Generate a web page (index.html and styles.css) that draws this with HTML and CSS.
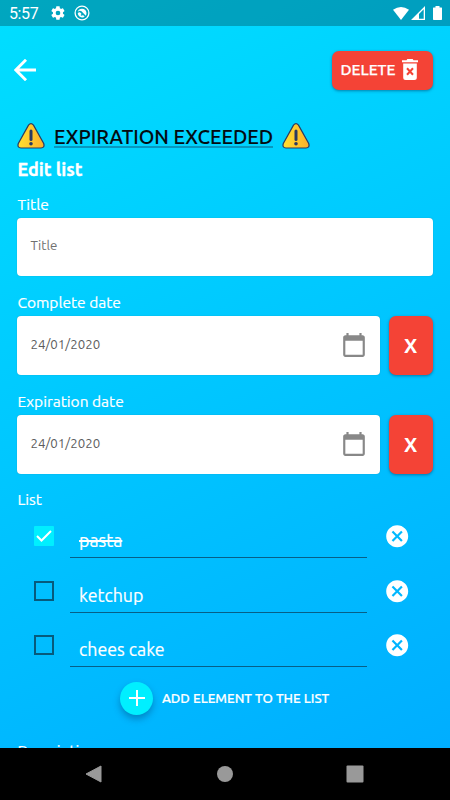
FILE: index.html
```html
<!DOCTYPE html>
<html lang="en">
<head>
<meta charset="utf-8">
<title>Edit list</title>
<link rel="stylesheet" href="styles.css">
</head>
<body>
<svg class="defs" width="0" height="0">
  <defs>
    <linearGradient id="amber" x1="0" x2="1"><stop offset="0" stop-color="#ffe02f"/><stop offset="1" stop-color="#fdb02c"/></linearGradient>
    <symbol id="warning" viewBox="0 0 28 26">
      <path d="M11.5 2.2Q14 -1 16.5 2.2L26.7 20.5Q28 24.7 24 25H4Q0 24.7 1.3 20.5Z" fill="url(#amber)" stroke="#2c3a61" stroke-width="1.2"/>
      <path d="M14 8v8.500" stroke="#2c3a61" stroke-width="3" stroke-linecap="round"/>
      <circle cx="14" cy="20.700" r="1.800" fill="#2c3a61"/>
    </symbol>
    <symbol id="calendar" viewBox="0 0 24 24">
      <path d="M20 3h-1V1h-2v2H7V1H5v2H4c-1.100 0-2 .9-2 2v16c0 1.100.9 2 2 2h16c1.100 0 2-.9 2-2V5c0-1.100-.9-2-2-2zm0 18H4V8h16v13z"/>
    </symbol>
    <symbol id="remove" viewBox="0 0 24 24">
      <path d="M12 2C6.470 2 2 6.470 2 12s4.470 10 10 10 10-4.470 10-10S17.530 2 12 2zm5 13.590L15.590 17 12 13.410 8.410 17 7 15.590 10.590 12 7 8.410 8.410 7 12 10.590 15.590 7 17 8.410 13.410 12 17 15.590z"/>
    </symbol>
  </defs>
</svg>
<div class="phone">
  <div class="status">
    <span class="clock">5:57</span>
    <svg class="gear" viewBox="0 0 24 24"><path d="M19.400 13c0-.3.100-.6.100-1s0-.7-.1-1l2.100-1.700c.2-.1.200-.4.100-.6l-2-3.500c-.1-.2-.4-.3-.6-.2l-2.500 1c-.5-.4-1.100-.7-1.700-1l-.4-2.600c0-.2-.2-.4-.5-.4h-4c-.2 0-.5.200-.5.400L9 5c-.6.300-1.200.6-1.700 1l-2.500-1c-.2-.1-.5 0-.6.200l-2 3.500c-.1.200-.1.500.1.600L4.500 11c0 .3-.1.700-.1 1s0 .7.100 1l-2.200 1.700c-.2.100-.2.400-.1.600l2 3.500c.1.200.4.300.6.200l2.500-1c.5.400 1.100.7 1.700 1l.4 2.600c0 .2.300.4.500.4h4c.3 0 .5-.2.500-.4l.4-2.600c.6-.3 1.200-.6 1.700-1l2.500 1c.2.100.5 0 .6-.2l2-3.500c.1-.2.100-.5-.1-.6zM12 15.500a3.500 3.500 0 1 1 0-7 3.500 3.500 0 0 1 0 7z"/></svg>
    <svg class="ring" viewBox="0 0 16 16"><circle cx="8" cy="8" r="6.900" fill="none" stroke="#fff" stroke-width="1.300"/><path d="M3.700 7A4.500 4.500 0 0 1 12.400 7.200Q12.700 9.200 11.800 10.700L7.500 6.300Q5.500 5 3.700 7ZM3.700 8.500Q4.500 12 8 12.400Q9.600 12.500 10.700 11.700L9 10.100Q7.500 11.300 6.500 9.900L7.600 9L6.200 7.400Q4.500 7 3.700 8.500Z"/></svg>
    <span class="grow"></span>
    <svg class="wifi" viewBox="0 0 16 13"><path d="M0 2.700Q8-2.500 16 2.700L8 13Z"/></svg>
    <svg class="signal" viewBox="0 0 14 14"><path d="M14 0V14H0ZM12.700 3.200L8 7.900V12.700H12.700Z" fill-rule="evenodd"/></svg>
    <svg class="battery" viewBox="0 0 9 14"><path d="M2.500 0h4v1.400H8.500q.5 0 .5.600V13.300q0 .7-.7.700H.7Q0 14 0 13.300V2q0-.6.500-.6H2.500z"/></svg>
  </div>
  <main class="screen">
    <header class="bar">
      <svg class="back" viewBox="0 0 22 22"><path d="M12 .8L1.800 11L12 21.200M2 11H22" fill="none" stroke="#fff" stroke-width="2.900"/></svg>
      <button class="red delete"><span>DELETE</span>
        <svg class="trash" viewBox="0 0 16 21"><path d="M0 1.300h4.500L5.300 0h5.400l.8 1.300H16v2H0zM1.200 4.600h13.600V18.500q0 2.500-2.500 2.500H3.700q-2.500 0-2.500-2.500z"/><path d="M5 9.300l6 6.400m0-6.400l-6 6.400" stroke="#f44336" stroke-width="2"/></svg>
      </button>
    </header>
    <div class="alert">
      <svg class="warn"><use href="#warning"/></svg>
      <span class="alert-text">EXPIRATION EXCEEDED</span>
      <svg class="warn"><use href="#warning"/></svg>
    </div>
    <h1 class="heading">Edit list</h1>
    <div class="label l-title">Title</div>
    <div class="field"><span class="hint">Title</span></div>
    <div class="label l-complete">Complete date</div>
    <div class="row">
      <div class="field"><span class="date">24/01/2020</span><svg class="cal"><use href="#calendar"/></svg></div>
      <button class="red clear">X</button>
    </div>
    <div class="label l-expiration">Expiration date</div>
    <div class="row">
      <div class="field"><span class="date">24/01/2020</span><svg class="cal"><use href="#calendar"/></svg></div>
      <button class="red clear">X</button>
    </div>
    <div class="label l-list">List</div>
    <div class="items">
      <div class="item">
        <span class="check on"><svg viewBox="0 0 20 20"><path d="M3 10l4.500 4.500L17 5" fill="none" stroke="#fff" stroke-width="2"/></svg></span>
        <div class="entry"><span class="pasta">pasta</span></div>
        <svg class="remove"><use href="#remove"/></svg>
      </div>
      <div class="item">
        <span class="check"></span>
        <div class="entry"><span class="ketchup">ketchup</span></div>
        <svg class="remove"><use href="#remove"/></svg>
      </div>
      <div class="item">
        <span class="check"></span>
        <div class="entry"><span class="cake">chees cake</span></div>
        <svg class="remove"><use href="#remove"/></svg>
      </div>
    </div>
    <div class="add">
      <span class="fab"><svg viewBox="0 0 16 16"><path d="M8 0V16M0 8H16" stroke="#fff" stroke-width="2"/></svg></span>
      <span class="add-text">ADD ELEMENT TO THE LIST</span>
    </div>
    <div class="label l-description">Description</div>
  </main>
  <nav class="nav">
    <svg viewBox="0 0 18 18"><path d="M16 1v16L1 9z" stroke="#999" stroke-linejoin="round"/></svg>
    <svg viewBox="0 0 18 18"><circle cx="9" cy="9" r="8"/></svg>
    <svg viewBox="0 0 18 18"><rect x=".5" y=".5" width="17" height="17" rx="1"/></svg>
  </nav>
</div>
</body>
</html>
```
FILE: styles.css
```css
* { box-sizing: border-box; }
body { margin: 0; font-family: Ubuntu, "Noto Sans", sans-serif; color: #fff; }
svg { display: block; flex: none; fill: #fff; }
.defs { position: absolute; }
.phone {
  width: 450px; height: 800px; overflow: hidden;
  display: flex; flex-direction: column;
  background: linear-gradient(155deg, #00dfff 0%, #00abff 100%);
}
.status {
  height: 26px; flex: none; display: flex; align-items: center;
  padding: 0 8px 0 9px; background: rgba(0, 0, 0, .25);
}
.clock { font: 16px/26px Roboto, sans-serif; width: 41px; padding-top: 2px; letter-spacing: -.4px; }
.gear { width: 16px; height: 16px; }
.ring { width: 16px; height: 16px; margin-left: 8px; }
.grow { flex: 1; }
.wifi { width: 16px; height: 13px; }
.signal { width: 14px; height: 14px; margin-left: 2px; }
.battery { width: 9px; height: 14px; margin: 0 0 0 8px; }
.screen { flex: 1; min-height: 0; overflow: hidden; padding: 25px 17.500px 0 17.400px; }
.bar { display: flex; justify-content: space-between; align-items: center; height: 38.500px; margin: 0 0 32.500px -3.500px; }
.back { width: 22px; height: 22px; }
button { border: 0; margin: 0; font-family: inherit; color: #fff; }
.red { background: #f44336; border-radius: 7px; box-shadow: 0 1px 3px rgba(0, 50, 90, .5); }
.delete { width: 101px; height: 38.500px; padding: 0 15px 1px 9px; display: flex; align-items: center; justify-content: space-between; font-size: 15.500px; font-weight: 500; -webkit-text-stroke: .25px #fff; }
.trash { width: 16px; height: 21px; }
.alert { height: 28px; display: flex; align-items: center; margin-left: -.4px; }
.warn { width: 28px; height: 26px; }
.alert-text {
  width: 219px; height: 24px; margin: 0 9px; line-height: 25px; white-space: nowrap;
  color: #050b10; font-size: 20px; font-weight: 500; border-bottom: 2px solid #0798c0;
  -webkit-text-stroke: .1px #050b10;
}
.heading { margin: 7px 0 0; font-size: 18px; line-height: 24px; font-weight: 700; -webkit-text-stroke: .3px #fff; }
.label { font-size: 15.500px; line-height: 20px; height: 20px; white-space: nowrap; -webkit-text-stroke: .2px #fff; }
.l-title { margin: 14px 0 2.500px; }
.field {
  height: 58.500px; flex: 1; display: flex; align-items: center; justify-content: space-between;
  padding: 0 15px 2px 13px; background: #fff; border-radius: 4px; color: #5c5c5c; font-size: 13.300px;
  box-shadow: 0 0 1px rgba(60, 80, 90, .5);
}
.hint { color: #707070; }
.l-complete, .l-expiration { margin: 17px 0 3px; }
.row { display: flex; gap: 9px; }
.cal { width: 26px; height: 26px; fill: #888; position: relative; top: 1px; margin-right: -2px; }
.clear { width: 44px; height: 59px; padding: 0; font-size: 20px; font-weight: 700; }
.l-list { margin-top: 16px; }
.items { padding: 0 22px 0 16.600px; margin-top: -1px; }
.item { height: 54.600px; display: flex; align-items: center; }
.check { width: 20px; height: 20px; border: 2px solid #075a7c; flex: none; margin-right: 16px; }
.check.on { background: #00efff; border: 0; border-radius: 1px; }
.entry { width: 297px; height: 44px; border-bottom: 1px solid #075f87; padding: 0 9px; line-height: 53.500px; font-size: 17.800px; margin-right: 17px; -webkit-text-stroke: .2px #fff; }
.pasta { text-decoration: line-through; text-decoration-thickness: 1.500px; }
.remove { width: 26.400px; height: 26.400px; margin-right: -2px; }
.add { display: flex; align-items: center; gap: 8.500px; margin: 9px 0 0 103px; }
.fab { width: 33px; height: 33px; border-radius: 50%; background: #00efff; display: grid; place-items: center; box-shadow: 0 4px 7px rgba(0, 60, 110, .4); }
.fab svg { width: 16px; height: 16px; }
.add-text { font-size: 13.300px; font-weight: 500; white-space: nowrap; -webkit-text-stroke: .2px #fff; }
.l-description { margin-top: 26px; }
.nav { height: 52px; flex: none; background: #000; display: flex; justify-content: space-between; padding: 17px 86px 0 85px; }
.nav svg { width: 18px; height: 18px; fill: #999; }
```
